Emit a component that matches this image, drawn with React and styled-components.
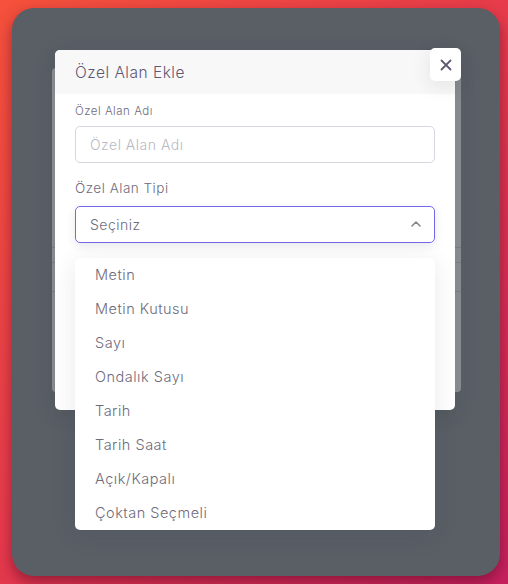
import React from 'react';
import styled, { createGlobalStyle } from 'styled-components';

const GlobalStyle = createGlobalStyle`
  html, body {
    margin: 0;
    padding: 0;
  }
  body {
    width: 508px;
    height: 584px;
    overflow: hidden;
    background: linear-gradient(135deg, #f5513b 0%, #e63a4c 50%, #c6215f 100%);
    font-family: Inter, "Noto Sans", sans-serif;
    letter-spacing: 0.5px;
  }
`;

const Frame = styled.div`
  position: relative;
  box-sizing: border-box;
  margin: 8px 0 0 12px;
  width: 488px;
  height: 568px;
  border-radius: 22px;
  background: #5a5f66;
  box-shadow: 0 6px 14px rgba(90, 10, 35, 0.55);
  padding: 60px 39px 0 40px;
`;

// faded page card sitting under the dialog backdrop
const ShadeCard = styled.div`
  height: 324px;
  border-radius: 4px;
  background: #8d9195;
  display: flex;
  flex-direction: column;
  padding-top: 179px;
  box-sizing: border-box;
`;

const ShadeRow = styled.div`
  height: ${p => p.h}px;
  border-bottom: 1px solid #7d8185;
`;

const Dialog = styled.div`
  position: absolute;
  left: 43px;
  top: 42px;
  width: 400px;
  height: 360px;
  background: #fff;
  border-radius: 5px;
  box-shadow: 0 5px 20px rgba(34, 41, 47, 0.15);
`;

const Header = styled.div`
  height: 44px;
  display: flex;
  align-items: center;
  padding: 0 20px;
  background: #f8f8f8;
  border-radius: 5px 5px 0 0;
  color: #5e5873;
  font-size: 15.5px;
  font-weight: 300;
`;

const CloseBtn = styled.button`
  position: absolute;
  top: -2px;
  right: -6px;
  width: 31px;
  height: 33px;
  border: none;
  border-radius: 5px;
  background: #fff;
  box-shadow: 0 5px 20px rgba(34, 41, 47, 0.1);
  display: flex;
  align-items: center;
  justify-content: center;
  padding: 0;
  color: #5e5873;
`;

const Body = styled.div`
  padding: 11px 20px 0;
  display: flex;
  flex-direction: column;
`;

const Label = styled.label`
  color: #6e6b7b;
  font-size: ${p => (p.big ? 13.5 : 11.5)}px;
  font-weight: 300;
  margin-bottom: ${p => (p.big ? 10 : 7)}px;
  line-height: 1.2;
`;

const Field = styled.div`
  position: relative;
  box-sizing: border-box;
  height: 37px;
  border: 1px solid ${p => (p.focus ? '#7367f0' : '#d8d6de')};
  border-radius: 5px;
  display: flex;
  align-items: center;
  justify-content: space-between;
  padding: 0 12px 0 14px;
  font-size: 14px;
  font-weight: 300;
  color: ${p => (p.muted ? '#b9b9c3' : '#6e6b7b')};
  margin-bottom: ${p => p.mb || 0}px;
  box-shadow: ${p => (p.focus ? '0 3px 10px 0 rgba(34, 41, 47, 0.1)' : 'none')};
`;

const Menu = styled.ul`
  position: absolute;
  left: -1px;
  right: -1px;
  top: 51px;
  margin: 0;
  padding: 0;
  list-style: none;
  background: #fff;
  border-radius: 5px;
  box-shadow: 0 5px 25px rgba(34, 41, 47, 0.1);
  z-index: 2;
`;

const Option = styled.li`
  height: 34px;
  display: flex;
  align-items: center;
  padding-left: 20px;
  font-size: 14.5px;
  color: #6e6b7b;
`;

const options = [
  'Metin',
  'Metin Kutusu',
  'Sayı',
  'Ondalık Sayı',
  'Tarih',
  'Tarih Saat',
  'Açık/Kapalı',
  'Çoktan Seçmeli',
];

const App = () => (
  <>
    <GlobalStyle />
    <Frame>
      <ShadeCard>
        <ShadeRow h={0} />
        <ShadeRow h={14} />
        <ShadeRow h={28} />
      </ShadeCard>
      <Dialog>
        <Header>Özel Alan Ekle</Header>
        <CloseBtn>
          <svg width="12" height="12" viewBox="0 0 12 12" fill="none">
            <path d="M1.5 1.5l9 9M10.5 1.5l-9 9" stroke="currentColor" strokeWidth="1.8" strokeLinecap="round" />
          </svg>
        </CloseBtn>
        <Body>
          <Label>Özel Alan Adı</Label>
          <Field muted mb={17}>Özel Alan Adı</Field>
          <Label big>Özel Alan Tipi</Label>
          <Field focus>
            Seçiniz
            <svg width="12" height="8" viewBox="0 0 12 8" fill="none">
              <path d="M2 6l4-4 4 4" stroke="#82868b" strokeWidth="1.6" strokeLinecap="round" strokeLinejoin="round" />
            </svg>
            <Menu>
              {options.map(o => (
                <Option key={o}>{o}</Option>
              ))}
            </Menu>
          </Field>
        </Body>
      </Dialog>
    </Frame>
  </>
);

export default App;
